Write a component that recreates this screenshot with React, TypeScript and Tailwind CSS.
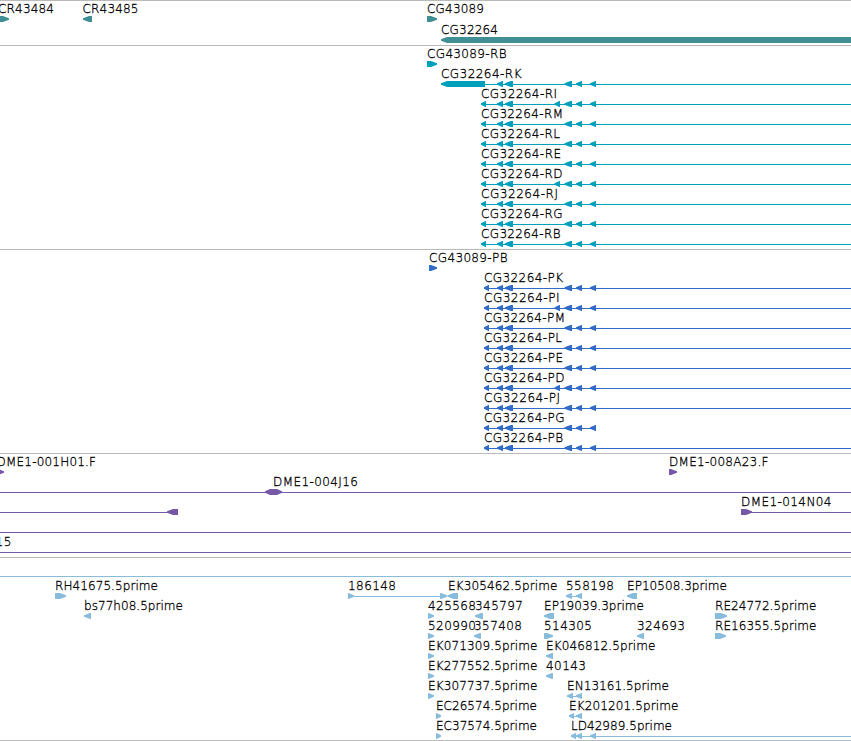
import React from "react";

// [text, x, width, baseline]
type Label = [string, number, number, number];
// [direction, x1, x2, top]
type Glyph = ["l" | "r" | "both", number, number, number];
// [x1, x2, y]
type Line = [number, number, number];

type TrackData = {
  id: string;
  top: number;
  height: number;
  color: string;
  labels: Label[];
  glyphs: Glyph[];
  lines: Line[];
};

const EXONS: [number, number][] = [
  [497, 503],
  [505, 513],
  [564.5, 572],
  [576, 582],
  [590, 596],
];

const EXTRA_EXON: [number, number] = [554.5, 560];

// One row per isoform: a line running to the right edge with left-facing exons
function isoforms(
  rows: [string, number][],
  x: number,
  startY: number,
  firstEnd: number
) {
  const labels: Label[] = [];
  const glyphs: Glyph[] = [];
  const lines: Line[] = [];

  rows.forEach(([name, width], i) => {
    const y = startY + i * 20;
    const suffix = name.slice(-2);
    labels.push([name, x, width, y]);
    lines.push([x + 2, suffix === "PG" ? 596 : 851, y + 6]);
    glyphs.push(["l", x, firstEnd, y + 3]);
    EXONS.forEach(([a, b]) => glyphs.push(["l", a, b, y + 3]));
    if (["RI", "RD", "PI", "PD"].includes(suffix)) {
      glyphs.push(["l", EXTRA_EXON[0], EXTRA_EXON[1], y + 3]);
    }
  });

  return { labels, glyphs, lines };
}

const transcripts = isoforms(
  [
    ["CG32264-RI", 76],
    ["CG32264-RM", 82],
    ["CG32264-RL", 79],
    ["CG32264-RE", 80],
    ["CG32264-RD", 81.5],
    ["CG32264-RJ", 77],
    ["CG32264-RG", 81.5],
    ["CG32264-RB", 79.5],
  ],
  481,
  98,
  486
);

const proteins = isoforms(
  [
    ["CG32264-PK", 79],
    ["CG32264-PI", 75.5],
    ["CG32264-PM", 81],
    ["CG32264-PL", 78],
    ["CG32264-PE", 79],
    ["CG32264-PD", 80.5],
    ["CG32264-PJ", 76],
    ["CG32264-PG", 80.5],
    ["CG32264-PB", 79],
  ],
  484,
  282,
  489
);

const TRACKS: TrackData[] = [
  {
    id: "genes",
    top: 0,
    height: 45,
    color: "#3f8f94",
    labels: [
      ["CR43484", -2, 56, 13],
      ["CR43485", 82.5, 56, 13],
      ["CG43089", 427, 57, 13],
      ["CG32264", 441, 57, 34],
    ],
    glyphs: [
      ["r", -4, 9, 16],
      ["l", 83, 92, 16],
      ["r", 427, 437, 16],
      ["l", 441, 860, 37],
    ],
    lines: [],
  },
  {
    id: "transcripts",
    top: 45,
    height: 204,
    color: "#009fbc",
    labels: [
      ["CG43089-RB", 427, 79.5, 58],
      ["CG32264-RK", 441, 80.5, 78],
      ...transcripts.labels,
    ],
    glyphs: [
      ["r", 427, 437, 61],
      ["l", 441, 485, 81],
      ...EXONS.map(([a, b]): Glyph => ["l", a, b, 81]),
      ...transcripts.glyphs,
    ],
    lines: [[485, 851, 84], ...transcripts.lines],
  },
  {
    id: "proteins",
    top: 249,
    height: 204,
    color: "#306bc8",
    labels: [["CG43089-PB", 429, 78.5, 262], ...proteins.labels],
    glyphs: [["r", 429, 437, 265], ...proteins.glyphs],
    lines: proteins.lines,
  },
  {
    id: "clones",
    top: 453,
    height: 104,
    color: "#7559a8",
    labels: [
      ["DME1-001H01.F", -3.5, 99.5, 466],
      ["DME1-008A23.F", 669, 99.5, 466],
      ["DME1-004J16", 273, 85, 486],
      ["DME1-014N04", 741, 90.5, 506],
      ["15", -4.5, 16, 546],
    ],
    glyphs: [
      ["r", -4, 4, 469],
      ["r", 669, 677, 469],
      ["both", 265, 282, 489],
      ["l", 167, 178, 509],
      ["r", 741, 752, 509],
    ],
    lines: [
      [0, 851, 492],
      [0, 178, 512],
      [741, 851, 512],
      [0, 851, 532],
      [0, 851, 552],
    ],
  },
  {
    id: "ests",
    top: 557,
    height: 183,
    color: "#87bcdd",
    labels: [
      ["RH41675.5prime", 55, 103, 590],
      ["186148", 348, 48, 590],
      ["EK305462.5prime", 448, 109.5, 590],
      ["558198", 566, 48, 590],
      ["EP10508.3prime", 627, 100, 590],
      ["bs77h08.5prime", 84, 99, 610],
      ["425568", 428, 48, 610],
      ["345797", 475, 48, 610],
      ["EP19039.3prime", 544, 100, 610],
      ["RE24772.5prime", 715, 101.5, 610],
      ["520990", 428, 48, 630],
      ["357408", 474, 48, 630],
      ["514305", 544, 48, 630],
      ["324693", 637, 48, 630],
      ["RE16355.5prime", 715, 101.5, 630],
      ["EK071309.5prime", 428, 109.5, 650],
      ["EK046812.5prime", 546, 109.5, 650],
      ["EK277552.5prime", 428, 109.5, 670],
      ["40143", 546, 40, 670],
      ["EK307737.5prime", 428, 109.5, 690],
      ["EN13161.5prime", 567, 102, 690],
      ["EC26574.5prime", 436, 101, 710],
      ["EK201201.5prime", 569, 109.5, 710],
      ["EC37574.5prime", 436, 101, 730],
      ["LD42989.5prime", 571, 101, 730],
    ],
    glyphs: [
      ["r", 55, 66, 593],
      ["r", 348, 354, 593],
      ["r", 440, 447, 593],
      ["l", 447.5, 458, 593],
      ["l", 566, 572, 593],
      ["l", 576, 582, 593],
      ["l", 627, 637, 593],
      ["l", 84, 91, 613],
      ["r", 428, 434, 613],
      ["l", 475, 483, 613],
      ["l", 544, 554, 613],
      ["r", 715, 727, 613],
      ["r", 428, 434, 633],
      ["l", 474, 481, 633],
      ["r", 544, 553, 633],
      ["l", 637, 644, 633],
      ["r", 715, 726, 633],
      ["r", 428, 434, 653],
      ["l", 546, 553, 653],
      ["r", 428, 434, 673],
      ["l", 546, 553, 673],
      ["r", 428, 434, 693],
      ["l", 567, 573, 693],
      ["l", 576, 582, 693],
      ["r", 436, 441, 713],
      ["l", 569, 574, 713],
      ["l", 576, 582, 713],
      ["r", 436, 441, 733],
      ["l", 571, 576, 733],
      ["l", 576, 582, 733],
      ["l", 590, 596, 733],
    ],
    lines: [
      [0, 851, 576],
      [348, 447, 596],
      [566, 582, 596],
      [567, 582, 696],
      [569, 582, 716],
      [571, 851, 736],
    ],
  },
];

function glyphPoints([dir, a, b, y]: Glyph) {
  const head = Math.min(6, b - a - 0.5);
  if (dir === "l") {
    return `${a},${y + 2.2} ${a + head},${y} ${b},${y} ${b},${y + 6} ${a + head},${y + 6} ${a},${y + 3.8}`;
  }
  if (dir === "r") {
    return `${a},${y} ${b - head},${y} ${b},${y + 2.2} ${b},${y + 3.8} ${b - head},${y + 6} ${a},${y + 6}`;
  }
  return `${a},${y + 2.2} ${a + 5},${y} ${b - 5},${y} ${b},${y + 2.2} ${b},${y + 3.8} ${b - 5},${y + 6} ${a + 5},${y + 6} ${a},${y + 3.8}`;
}

function Track({ track }: { track: TrackData }) {
  const { top, height, color, labels, glyphs, lines } = track;
  return (
    <section className="border-t border-[#bababa]">
      <svg
        className="block"
        width={851}
        height={height - 1}
        viewBox={`0 ${top + 1} 851 ${height - 1}`}
      >
        <g fill={color} shapeRendering="crispEdges">
          {lines.map(([a, b, y]) => (
            <rect key={`${a}-${y}`} x={a} y={y} width={b - a} height={1} />
          ))}
        </g>
        <g fill={color}>
          {glyphs.map((g) => (
            <polygon key={g.join("-")} points={glyphPoints(g)} />
          ))}
        </g>
        <g className="fill-black stroke-black stroke-[0.3px] font-['DejaVu_Sans_Light','DejaVu_Sans',sans-serif] font-extralight text-[12px]">
          {labels.map(([text, x, width, y]) => (
            <text key={`${text}-${y}`} x={x} y={y} textLength={width}>
              {text}
            </text>
          ))}
        </g>
      </svg>
    </section>
  );
}

export default function App() {
  return (
    <main className="w-[851px] h-[741px] overflow-hidden bg-white border-b border-[#bababa]">
      {TRACKS.map((t) => (
        <Track key={t.id} track={t} />
      ))}
    </main>
  );
}
